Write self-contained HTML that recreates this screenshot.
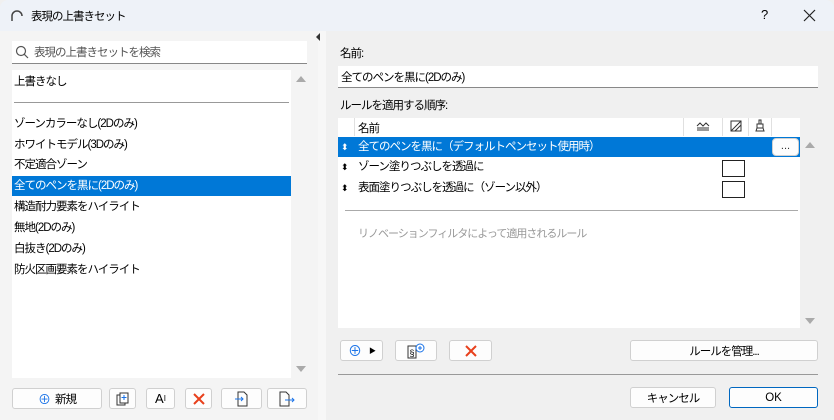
<!DOCTYPE html>
<html><head><meta charset="utf-8"><style>
*{box-sizing:border-box;margin:0;padding:0}
body{width:834px;height:420px;overflow:hidden;font-family:"Liberation Sans","Noto Sans CJK JP",sans-serif;font-size:11.5px;letter-spacing:-1px;color:#000;background:#f0f0f0;position:relative}
.a{position:absolute}
.btn{position:absolute;background:#fdfdfd;border:1px solid #d0d0d0;border-radius:3px;display:flex;align-items:center;justify-content:center;font-size:11.5px}
.it{position:absolute;left:12px;width:279px;height:21px;line-height:21px;padding-left:2px;font-size:11.5px}
.row{position:absolute;left:338px;width:432px;height:21px;line-height:21px;font-size:11.5px}
</style></head><body>
<div class="a" style="left:0;top:0;width:834px;height:31px;background:#eef2f8;border-radius:8px 8px 0 0"></div>
<svg class="a" style="left:10px;top:9px" width="14" height="14"><path d="M2 12 V7 A5 5 0 0 1 12 7" fill="none" stroke="#444" stroke-width="1.5"/></svg>
<div class="a" style="left:31px;top:8px;font-size:11.5px">表現の上書きセット</div>
<div class="a" style="left:761px;top:7px;font-size:13px">?</div>
<svg class="a" style="left:803px;top:9px" width="13" height="13"><path d="M1 1L12 12M12 1L1 12" stroke="#222" stroke-width="1.2"/></svg>
<div class="a" style="left:0;top:31px;width:318px;height:389px;background:#f4f4f4"></div>
<div class="a" style="left:318px;top:31px;width:8px;height:389px;background:#f7f7f7"></div>
<div class="a" style="left:316px;top:33px;width:0;height:0;border-top:4px solid transparent;border-bottom:4px solid transparent;border-right:4px solid #333"></div>
<div class="a" style="left:12px;top:41px;width:295px;height:23px;background:#fff;border-bottom:1px solid #888"></div>
<svg class="a" style="left:15px;top:45px" width="14" height="14"><circle cx="6" cy="6" r="4.5" fill="none" stroke="#555" stroke-width="1.2"/><path d="M9.3 9.3L13 13" stroke="#555" stroke-width="1.2"/></svg>
<div class="a" style="left:34px;top:44px;color:#555">表現の上書きセットを検索</div>
<div class="a" style="left:12px;top:70px;width:279px;height:308px;background:#fff"></div>
<div class="a" style="left:296px;top:76px;border-left:5px solid transparent;border-right:5px solid transparent;border-bottom:6px solid #aaa"></div>
<div class="a" style="left:296px;top:366px;border-left:5px solid transparent;border-right:5px solid transparent;border-top:6px solid #aaa"></div>
<div class="it" style="top:72px">上書きなし</div>
<div class="a" style="left:14px;top:102px;width:275px;height:1px;background:#999"></div>
<div class="it" style="top:114px">ゾーンカラーなし(2Dのみ)</div>
<div class="it" style="top:135px">ホワイトモデル(3Dのみ)</div>
<div class="it" style="top:155px">不定適合ゾーン</div>
<div class="it" style="top:176px;background:#0078d7;color:#fff;height:20px;line-height:20px">全てのペンを黒に(2Dのみ)</div>
<div class="it" style="top:197px">構造耐力要素をハイライト</div>
<div class="it" style="top:218px">無地(2Dのみ)</div>
<div class="it" style="top:239px">白抜き(2Dのみ)</div>
<div class="it" style="top:260px">防火区画要素をハイライト</div>
<div class="btn" style="left:12px;top:388px;width:90px;height:21px"><span style="color:#1a73e8;font-size:13px;margin-right:5px">⊕</span>新規</div>
<div class="btn" style="left:109px;top:388px;width:27px;height:21px"><svg width="14" height="14"><rect x="1" y="3" width="8" height="10" fill="none" stroke="#333"/><rect x="4" y="1" width="8" height="10" fill="#fff" stroke="#333"/><path d="M8 3v5M5.5 5.5h5" stroke="#1a73e8"/></svg></div>
<div class="btn" style="left:146px;top:388px;width:29px;height:21px;font-size:13px;letter-spacing:0">A<sup style="font-size:8px">I</sup></div>
<div class="btn" style="left:185px;top:388px;width:27px;height:21px"><svg width="12" height="12"><path d="M1 1L11 11M11 1L1 11" stroke="#e8401c" stroke-width="2"/></svg></div>
<div class="btn" style="left:221px;top:388px;width:41px;height:21px"><svg width="14" height="16"><path d="M3 1h6l3 3v11H3z" fill="none" stroke="#333"/><path d="M0 8h8M6 6l2 2-2 2" stroke="#1a73e8" fill="none"/></svg></div>
<div class="btn" style="left:267px;top:388px;width:40px;height:21px"><svg width="16" height="16"><path d="M1 1h6l3 3v11H1z" fill="none" stroke="#333"/><path d="M6 9h9M13 7l2 2-2 2" stroke="#1a73e8" fill="none"/></svg></div>

<div class="a" style="left:340px;top:45px">名前:</div>
<div class="a" style="left:338px;top:66px;width:480px;height:22px;background:#fff;border-bottom:1px solid #888;padding:3px 3px">全てのペンを黒に(2Dのみ)</div>
<div class="a" style="left:340px;top:97px">ルールを適用する順序:</div>
<div class="a" style="left:338px;top:118px;width:462px;height:210px;background:#fff"></div>
<div class="a" style="left:354px;top:118px;width:1px;height:18px;background:#e0e0e0"></div>
<div class="a" style="left:683px;top:118px;width:1px;height:18px;background:#e0e0e0"></div>
<div class="a" style="left:722px;top:118px;width:1px;height:18px;background:#e0e0e0"></div>
<div class="a" style="left:748px;top:118px;width:1px;height:18px;background:#e0e0e0"></div>
<div class="a" style="left:771px;top:118px;width:1px;height:18px;background:#e0e0e0"></div>
<div class="a" style="left:358px;top:120px">名前</div>
<svg class="a" style="left:696px;top:121px" width="14" height="10"><path d="M1 5L4 2 7 5 10 2 13 5M1 7h12M1 9h12" stroke="#333" fill="none"/></svg>
<svg class="a" style="left:730px;top:120px" width="12" height="12"><rect x="1" y="1" width="10" height="10" fill="none" stroke="#333"/><path d="M1 11L11 1M5 11L11 5" stroke="#333"/></svg>
<svg class="a" style="left:755px;top:119px" width="10" height="13"><path d="M4 1h2v4H4zM2 5h6v4H2zM2 9h6l1 3H1z" fill="none" stroke="#333"/></svg>
<div class="row" style="top:137px;background:#0078d7;color:#fff;height:20px;line-height:20px"><span style="position:absolute;left:3px;font-size:9px">⬍</span><span style="position:absolute;left:20px">全てのペンを黒に（デフォルトペンセット使用時）</span></div>
<div class="a" style="left:770px;top:137px;width:30px;height:20px;background:#0078d7"></div>
<div class="btn" style="left:772px;top:138px;width:27px;height:18px;border-radius:4px;align-items:flex-end;padding-bottom:3px;font-size:11px;color:#333;letter-spacing:0">...</div>
<div class="row" style="top:157px"><span style="position:absolute;left:3px;font-size:9px">⬍</span><span style="position:absolute;left:20px">ゾーン塗りつぶしを透過に</span></div>
<div class="row" style="top:178px"><span style="position:absolute;left:3px;font-size:9px">⬍</span><span style="position:absolute;left:20px">表面塗りつぶしを透過に（ゾーン以外）</span></div>
<div class="a" style="left:722px;top:160px;width:23px;height:17px;border:1px solid #222"></div>
<div class="a" style="left:722px;top:181px;width:23px;height:17px;border:1px solid #222"></div>
<div class="a" style="left:345px;top:210px;width:453px;height:1px;background:#aaa"></div>
<div class="a" style="left:358px;top:225px;color:#999;font-size:11px">リノベーションフィルタによって適用されるルール</div>
<div class="a" style="left:805px;top:142px;border-left:5px solid transparent;border-right:5px solid transparent;border-bottom:6px solid #aaa"></div>
<div class="a" style="left:805px;top:318px;border-left:5px solid transparent;border-right:5px solid transparent;border-top:6px solid #aaa"></div>
<div class="btn" style="left:340px;top:340px;width:43px;height:21px"><span style="color:#1a73e8;font-size:14px">⊕</span><span style="font-size:7px;margin-left:8px">▶</span></div>
<div class="btn" style="left:395px;top:340px;width:42px;height:21px"><svg width="18" height="16"><rect x="1" y="3" width="8" height="12" fill="none" stroke="#333"/><text x="2.5" y="13" font-size="9" font-family="Liberation Sans">§</text><circle cx="13" cy="5" r="4" fill="#fff" stroke="#1a73e8"/><path d="M13 3v4M11 5h4" stroke="#1a73e8"/></svg></div>
<div class="btn" style="left:449px;top:340px;width:43px;height:21px"><svg width="12" height="12"><path d="M1 1L11 11M11 1L1 11" stroke="#e8401c" stroke-width="2"/></svg></div>
<div class="btn" style="left:630px;top:340px;width:188px;height:21px">ルールを管理...</div>
<div class="a" style="left:338px;top:374px;width:480px;height:1px;background:#999"></div>
<div class="btn" style="left:630px;top:387px;width:86px;height:21px">キャンセル</div>
<div class="btn" style="left:729px;top:387px;width:89px;height:21px;border-color:#0067c0;letter-spacing:0">OK</div>
</body></html>
